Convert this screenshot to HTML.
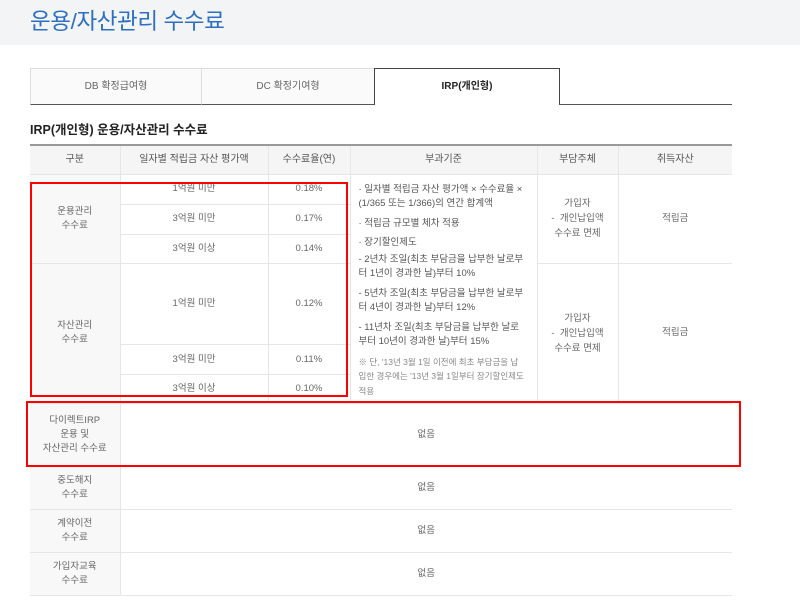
<!DOCTYPE html>
<html><head><meta charset="utf-8"><style>
*{margin:0;padding:0;box-sizing:border-box}
body{width:800px;height:606px;background:#fff;font-family:"Liberation Sans","Noto Sans CJK KR",sans-serif;color:#666;position:relative;overflow:hidden}
.hd{position:absolute;left:0;top:0;width:800px;height:45px;background:#f2f4f6}
.hd h1{position:absolute;left:30px;top:4px;font-size:22.5px;font-weight:normal;color:#2e6fc2;letter-spacing:-0.4px}
.tab{position:absolute;top:68px;height:37px;border:1px solid #ddd;border-bottom:1px solid #555;background:#fafafa;font-size:10px;text-align:center;line-height:36px;color:#666}
.tab.on{border:1px solid #444;border-bottom:none;background:#fff;font-weight:bold;color:#222;height:37px}
.line{position:absolute;top:104px;left:559px;width:173px;border-top:1px solid #555}
h2{position:absolute;left:30px;top:119px;font-size:12.5px;color:#222;font-weight:bold}
table{position:absolute;left:30px;top:144px;width:702px;border-collapse:collapse;table-layout:fixed;font-size:9.5px;text-align:center;color:#666}
td,th{border:1px solid #e6e6e6;font-weight:normal;padding:0;line-height:14px}
tr:first-child th{border-top:2px solid #999;background:#f5f5f5;color:#555;font-size:10px}
td.g{background:#f8f8f8}
table tr td:first-child,table tr th:first-child{border-left:none}
table tr td:last-child,table tr th:last-child{border-right:none}
.bk{text-align:left;padding:0 12px 0 8px;font-size:9.5px;line-height:14.5px;color:#555;vertical-align:top;padding-top:8px}
.bk p{margin-bottom:5px}
.bk .s{color:#888;font-size:8.5px}
.red{position:absolute;border:2px solid #f00}
</style></head><body>
<div class="hd"><h1>운용/자산관리 수수료</h1></div>
<div class="tab" style="left:30px;width:172px">DB 확정급여형</div>
<div class="tab" style="left:201px;width:174px">DC 확정기여형</div>
<div class="tab on" style="left:374px;width:186px">IRP(개인형)</div>
<div class="line"></div>
<h2>IRP(개인형) 운용/자산관리 수수료</h2>
<table>
<colgroup><col style="width:90px"><col style="width:148px"><col style="width:82px"><col style="width:187px"><col style="width:81px"><col style="width:114px"></colgroup>
<tr style="height:29px"><th>구분</th><th>일자별 적립금 자산 평가액</th><th>수수료율(연)</th><th>부과기준</th><th>부담주체</th><th>취득자산</th></tr>
<tr style="height:30px"><td class="g" rowspan="3">운용관리<br>수수료</td><td>1억원 미만</td><td>0.18%</td>
<td class="bk" rowspan="6"><p>· 일자별 적립금 자산 평가액 × 수수료율 × (1/365 또는 1/366)의 연간 합계액</p><p>· 적립금 규모별 체차 적용</p><p style="margin-bottom:2px">· 장기할인제도</p><p>- 2년차 조일(최초 부담금을 납부한 날로부터 1년이 경과한 날)부터 10%</p><p>- 5년차 조일(최초 부담금을 납부한 날로부터 4년이 경과한 날)부터 12%</p><p>- 11년차 조일(최초 부담금을 납부한 날로부터 10년이 경과한 날)부터 15%</p><p class="s">※ 단, '13년 3월 1일 이전에 최초 부담금을 납입한 경우에는 '13년 3월 1일부터 장기할인제도 적용</p></td>
<td rowspan="3" style="line-height:15px">가입자<br>- &nbsp;개인납입액<br>수수료 면제</td><td rowspan="3">적립금</td></tr>
<tr style="height:30px"><td>3억원 미만</td><td>0.17%</td></tr>
<tr style="height:29px"><td>3억원 이상</td><td>0.14%</td></tr>
<tr style="height:81px"><td class="g" rowspan="3">자산관리<br>수수료</td><td>1억원 미만</td><td>0.12%</td><td rowspan="3" style="line-height:15px">가입자<br>- &nbsp;개인납입액<br>수수료 면제</td><td rowspan="3">적립금</td></tr>
<tr style="height:30px"><td>3억원 미만</td><td>0.11%</td></tr>
<tr style="height:29px"><td>3억원 이상</td><td>0.10%</td></tr>
<tr style="height:63px"><td class="g">다이렉트IRP<br>운용 및<br>자산관리 수수료</td><td colspan="5">없음</td></tr>
<tr style="height:43px"><td class="g">중도해지<br>수수료</td><td colspan="5">없음</td></tr>
<tr style="height:43px"><td class="g">계약이전<br>수수료</td><td colspan="5">없음</td></tr>
<tr style="height:43px"><td class="g">가입자교육<br>수수료</td><td colspan="5">없음</td></tr>
</table>
<div class="red" style="left:30px;top:182px;width:318px;height:215px"></div>
<div class="red" style="left:26px;top:401px;width:715px;height:66px"></div>
</body></html>
